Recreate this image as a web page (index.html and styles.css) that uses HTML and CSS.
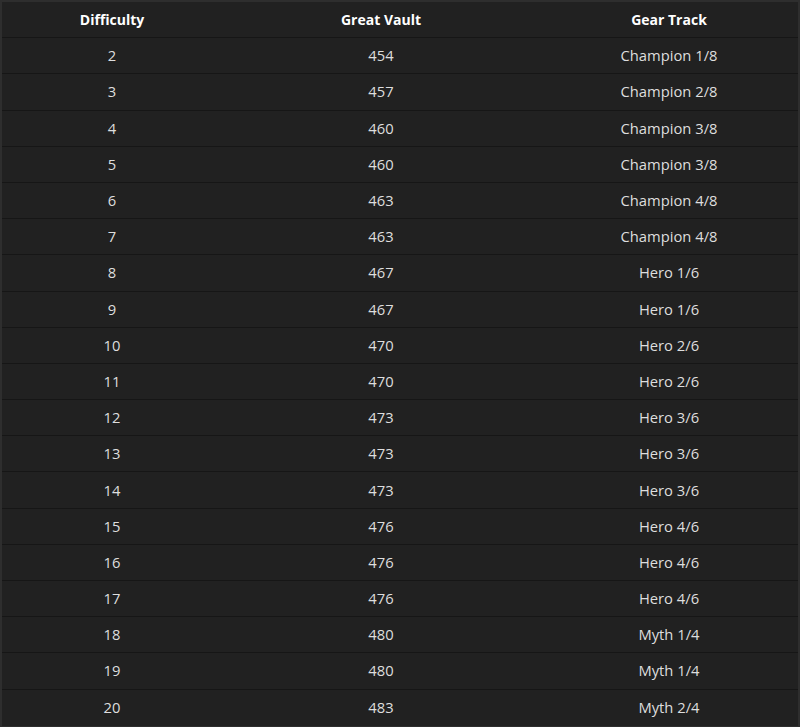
FILE: index.html
```html
<!DOCTYPE html>
<html>
<head>
<meta charset="utf-8">
<link rel="stylesheet" href="styles.css">
</head>
<body>
<table class="vault">
<colgroup><col class="c1"><col class="c2"><col class="c3"></colgroup>
<thead><tr><th>Difficulty</th><th>Great Vault</th><th>Gear Track</th></tr></thead>
<tbody>
<tr><td>2</td><td>454</td><td>Champion 1/8</td></tr>
<tr><td>3</td><td>457</td><td>Champion 2/8</td></tr>
<tr><td>4</td><td>460</td><td>Champion 3/8</td></tr>
<tr><td>5</td><td>460</td><td>Champion 3/8</td></tr>
<tr><td>6</td><td>463</td><td>Champion 4/8</td></tr>
<tr><td>7</td><td>463</td><td>Champion 4/8</td></tr>
<tr><td>8</td><td>467</td><td>Hero 1/6</td></tr>
<tr><td>9</td><td>467</td><td>Hero 1/6</td></tr>
<tr><td>10</td><td>470</td><td>Hero 2/6</td></tr>
<tr><td>11</td><td>470</td><td>Hero 2/6</td></tr>
<tr><td>12</td><td>473</td><td>Hero 3/6</td></tr>
<tr><td>13</td><td>473</td><td>Hero 3/6</td></tr>
<tr><td>14</td><td>473</td><td>Hero 3/6</td></tr>
<tr><td>15</td><td>476</td><td>Hero 4/6</td></tr>
<tr><td>16</td><td>476</td><td>Hero 4/6</td></tr>
<tr><td>17</td><td>476</td><td>Hero 4/6</td></tr>
<tr><td>18</td><td>480</td><td>Myth 1/4</td></tr>
<tr><td>19</td><td>480</td><td>Myth 1/4</td></tr>
<tr><td>20</td><td>483</td><td>Myth 2/4</td></tr>
</tbody>
</table>
</body>
</html>
```
FILE: styles.css
```css
html, body {
  margin: 0;
  padding: 0;
  background: #2e2e2e;
}
body {
  font-family: "Open Sans", "Noto Sans", sans-serif;
  font-size: 14px;
}
.vault {
  width: 800px;
  border-collapse: separate;
  border-spacing: 0;
  border: 2px solid #2e2e2e;
  background: #212121;
  table-layout: fixed;
}
.c1 { width: 220px; }
.c2 { width: 318px; }
.c3 { width: 258px; }
.vault th, .vault td {
  height: 35.2px;
  padding: 0;
  text-align: center;
  vertical-align: middle;
  border-bottom: 1px solid #161616;
}
.vault td {
  padding-bottom: 1px;
  height: 34.2px;
  color: #dedede;
  font-size: 14.75px;
}
.vault tbody tr:last-child td {
  border-bottom: none;
  height: 35.2px;
}
.vault th {
  color: #ffffff;
  font-weight: 700;
}
```
